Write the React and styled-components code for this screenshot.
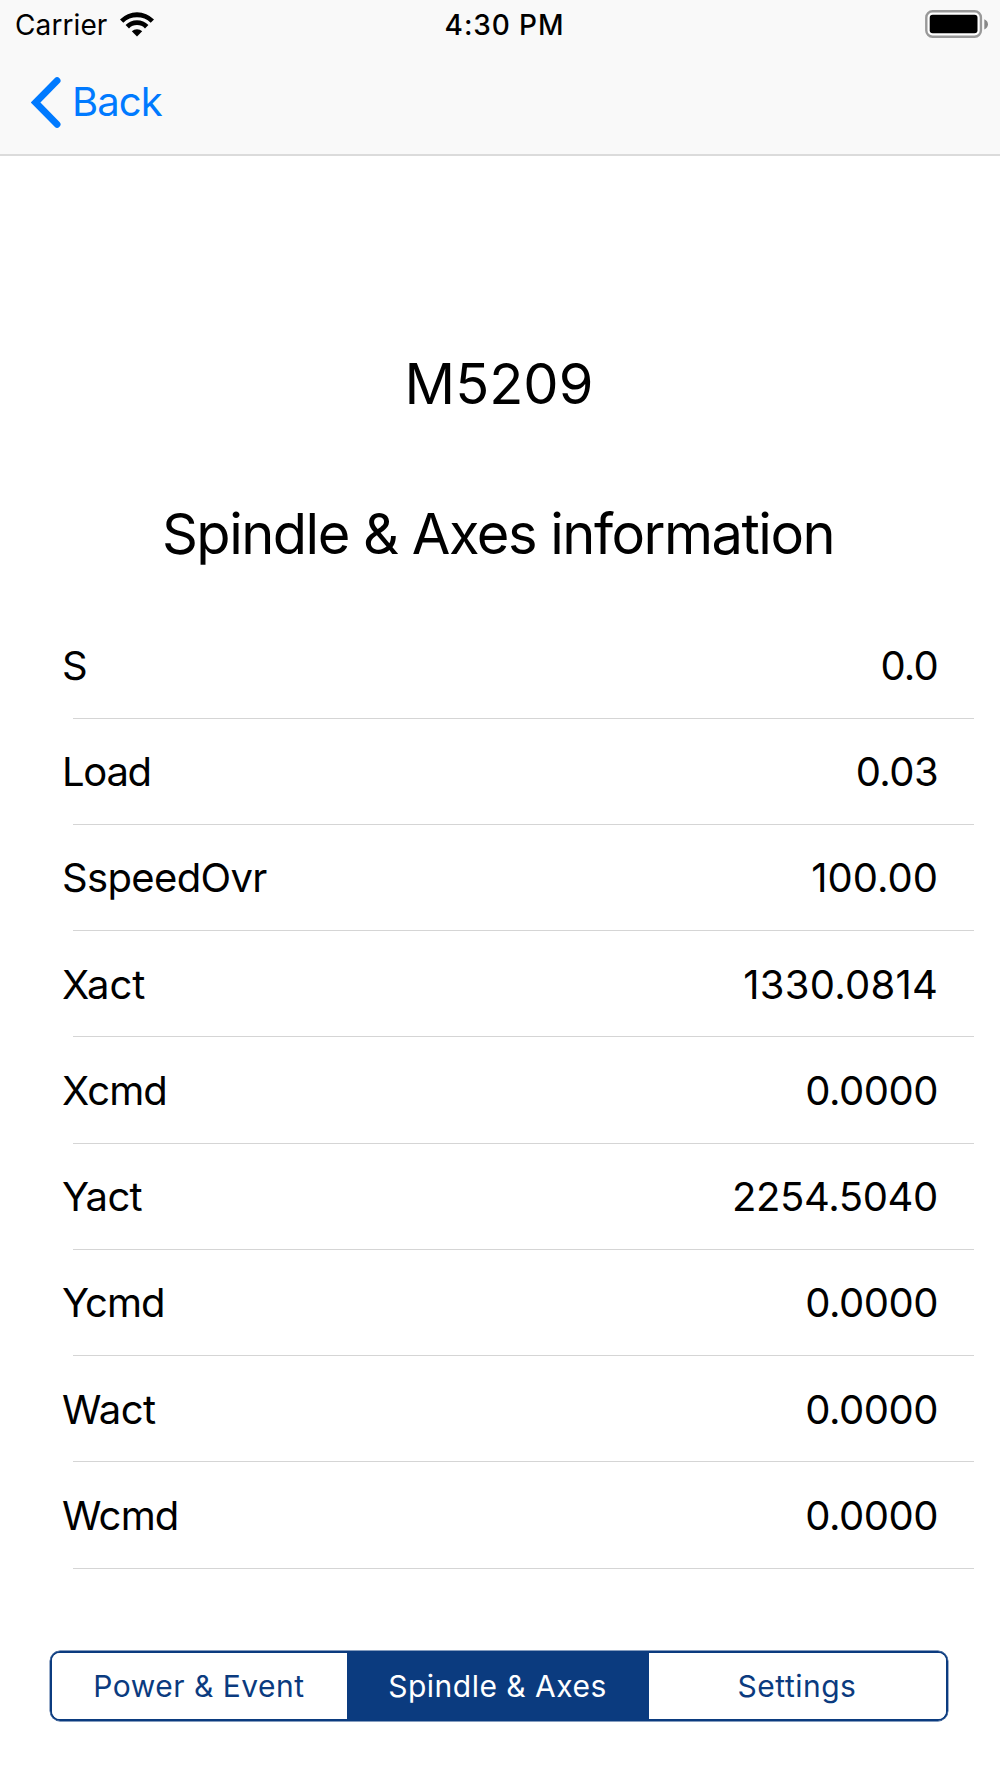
import React from "react";
import styled, { createGlobalStyle } from "styled-components";

// tracking is the letter spacing of the label and of the value, in px
const readings = [
  { label: "S", value: "0.0", tracking: [0, -0.8] },
  { label: "Load", value: "0.03", tracking: [-1.3, -0.6] },
  { label: "SspeedOvr", value: "100.00", tracking: [-0.65, 0] },
  { label: "Xact", value: "1330.0814", tracking: [0, 0.25] },
  { label: "Xcmd", value: "0.0000", tracking: [-0.9, -0.5] },
  { label: "Yact", value: "2254.5040", tracking: [-0.7, -0.35] },
  { label: "Ycmd", value: "0.0000", tracking: [-1, -0.5] },
  { label: "Wact", value: "0.0000", tracking: [-0.6, -0.5] },
  { label: "Wcmd", value: "0.0000", tracking: [-0.8, -0.5] },
];

const tabs = ["Power & Event", "Spindle & Axes", "Settings"];

const App = () => {
  return (
    <Screen>
      <GlobalStyle />

      <Header>
        <StatusBar>
          <Carrier>
            <span>Carrier</span>
            <WifiIcon />
          </Carrier>
          <Clock>4:30 PM</Clock>
          <BatteryIcon />
        </StatusBar>
        <BackButton type="button">
          <ChevronIcon />
          <span>Back</span>
        </BackButton>
      </Header>

      <Main>
        <Title>M5209</Title>
        <Subtitle>Spindle & Axes information</Subtitle>
        <List>
          {readings.map(({ label, value, tracking }) => (
            <Row key={label}>
              <Label $tracking={tracking[0]}>{label}</Label>
              <Value $tracking={tracking[1]}>{value}</Value>
            </Row>
          ))}
        </List>
      </Main>

      <Segments>
        {tabs.map((tab) => (
          <Segment key={tab} type="button" $active={tab === "Spindle & Axes"}>
            {tab}
          </Segment>
        ))}
      </Segments>
    </Screen>
  );
};

const WifiIcon = () => (
  <svg width="34" height="25" viewBox="0 0 34 25">
    <path d="M0 7.4A24 24 0 0 1 34 7.4L30.7 10.8A19.4 19.4 0 0 0 3.3 10.8Z" />
    <path d="M5.6 13A16.1 16.1 0 0 1 28.4 13L25 16.4A11.4 11.4 0 0 0 9 16.4Z" />
    <path d="M11.8 19.2A7.6 7.6 0 0 1 22.2 19.2L17 24.4Z" />
  </svg>
);

const BatteryIcon = () => (
  <svg width="64" height="28" viewBox="0 0 64 28">
    <rect
      x="1.3"
      y="1.3"
      width="54.6"
      height="25.4"
      rx="6.2"
      fill="#fff"
      stroke="#999"
      strokeWidth="2.4"
    />
    <rect x="4.7" y="4.8" width="47.8" height="18.4" rx="3" />
    <path d="M59.3 9.2C64.2 11 64.2 17.6 59.3 19.4Z" fill="#888" />
  </svg>
);

const ChevronIcon = () => (
  <svg width="30" height="51" viewBox="0 0 30 51">
    <path
      d="M26.1 3.7L4.6 25.5L26.1 47.3"
      fill="none"
      stroke="#007aff"
      strokeWidth="6.8"
      strokeLinecap="round"
      strokeLinejoin="miter"
    />
  </svg>
);

// Styled Components
const GlobalStyle = createGlobalStyle`
  * {
    box-sizing: border-box;
  }

  body {
    margin: 0;
    background: #fff;
    color: #000;
    font-family: Inter, "Liberation Sans", sans-serif;
  }

  button {
    font-family: inherit;
    cursor: pointer;
  }
`;

const Screen = styled.div`
  display: flex;
  flex-direction: column;
  width: 1000px;
  height: 1778px;
  overflow: hidden;
`;

const Header = styled.header`
  height: 156px;
  background: #f9f9f9;
  border-bottom: 2px solid #dbdbdb;
`;

const StatusBar = styled.div`
  display: grid;
  grid-template-columns: 1fr auto 1fr;
  height: 50px;
  padding: 0 11px 0 15px;
  font-size: 28px;
  line-height: 51px;

  > svg {
    justify-self: end;
    margin-top: 10px;
  }
`;

const Carrier = styled.div`
  display: flex;
  gap: 13px;
  letter-spacing: 0.1px;

  svg {
    margin-top: 12px;
  }
`;

const Clock = styled.span`
  padding-left: 5px;
  font-weight: 500;
  letter-spacing: 0.9px;
`;

const BackButton = styled.button`
  display: flex;
  align-items: center;
  gap: 11px;
  height: 104px;
  padding: 0 0 0 31px;
  border: none;
  background: none;
  color: #007aff;
  font-size: 40px;
  letter-spacing: -0.9px;

  span {
    padding-bottom: 2px;
  }
`;

const Main = styled.main`
  flex: 1;
`;

const Title = styled.h1`
  margin: 194px 0 0;
  padding-right: 2px;
  font-size: 56px;
  font-weight: 400;
  line-height: 68px;
  text-align: center;
`;

const Subtitle = styled.h2`
  margin: 82px 0 0;
  padding-right: 4px;
  font-size: 56px;
  font-weight: 400;
  line-height: 68px;
  letter-spacing: -1.5px;
  text-align: center;
`;

const List = styled.ul`
  margin: 44.8px 26px 0 62px;
  padding: 0;
  list-style: none;
`;

const Row = styled.li`
  display: flex;
  justify-content: space-between;
  height: 106.25px;
  padding-right: 36px;
  font-size: 40px;
  line-height: 106px;
  background: linear-gradient(#d5d5d5, #d5d5d5) 11px 100% / 100% 1.33px
    no-repeat;
`;

const Label = styled.span`
  letter-spacing: ${({ $tracking }) => $tracking}px;
`;

const Value = styled.span`
  letter-spacing: ${({ $tracking }) => $tracking}px;
`;

const Segments = styled.nav`
  display: grid;
  grid-template-columns: 295px 302px 1fr;
  height: 70px;
  margin: 0 52px 57px 50px;
  overflow: hidden;
  border: 2px solid #0b3b7f;
  border-radius: 10px;
  box-shadow: 0 0 0 0.4px #0b3b7f;
`;

const Segment = styled.button`
  padding: 0 1px 0 0;
  border: none;
  background: ${({ $active }) => ($active ? "#0b3b7f" : "#fff")};
  color: ${({ $active }) => ($active ? "#fff" : "#0b3b7f")};
  font-size: 30px;
  letter-spacing: 0.5px;
`;

export default App;
